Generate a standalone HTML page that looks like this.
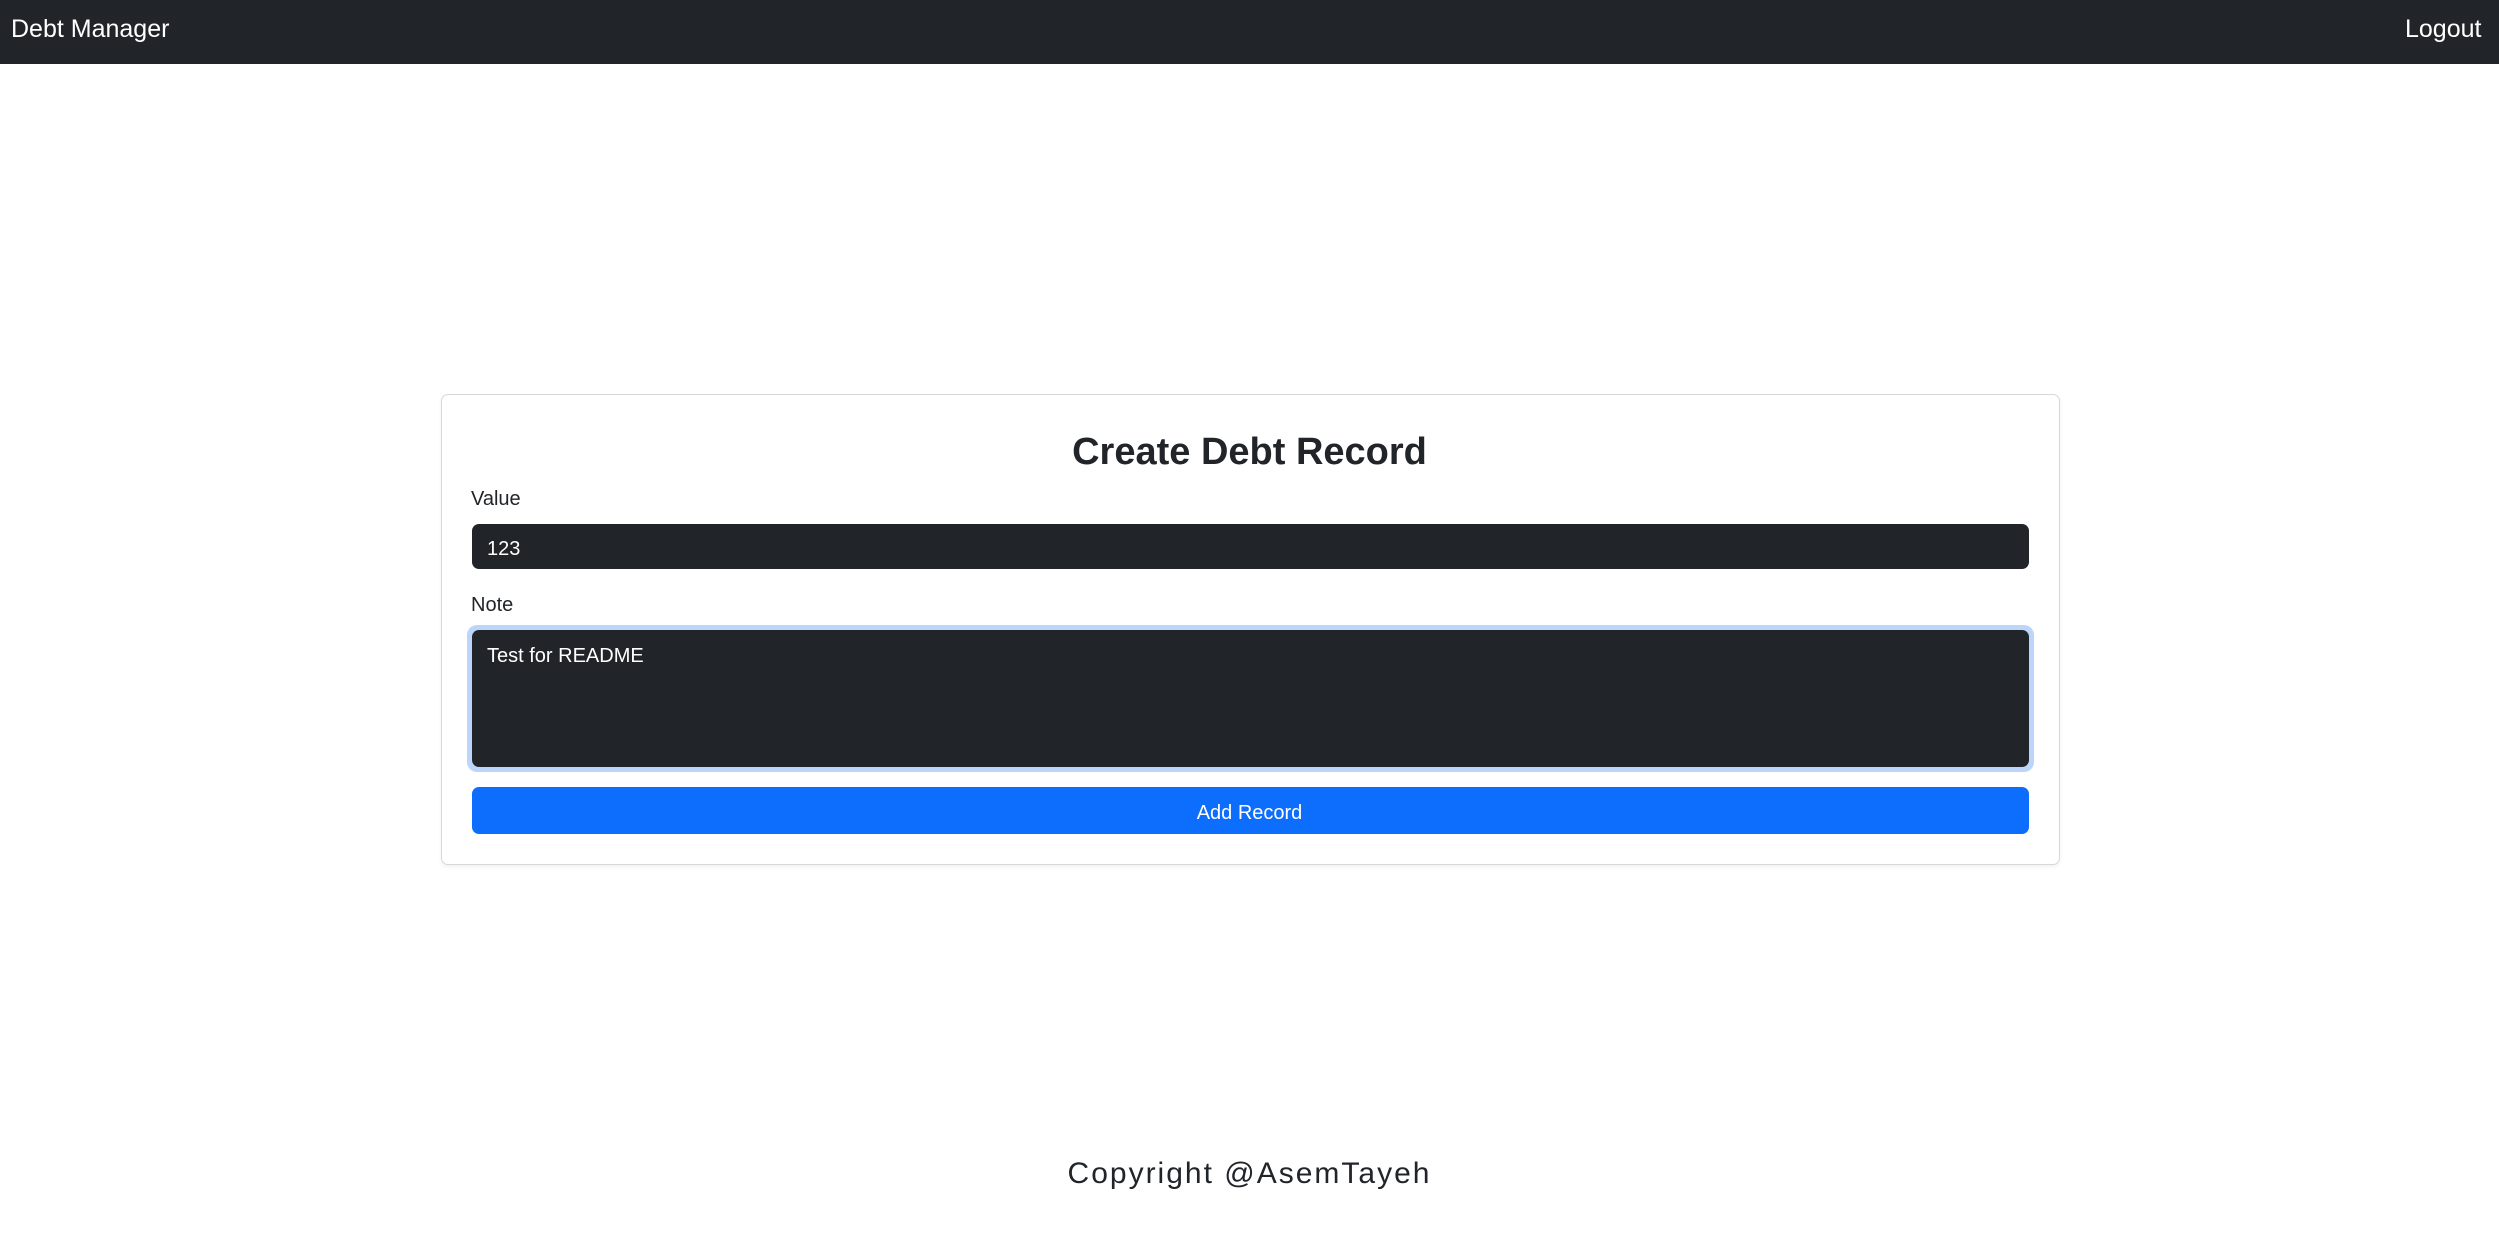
<!DOCTYPE html>
<html><head><meta charset="utf-8"><style>
*{box-sizing:border-box;margin:0;padding:0}
body{width:2499px;height:1242px;background:#fff;font-family:"Liberation Sans",sans-serif;position:relative;overflow:hidden;color:#212529}
.nav{position:absolute;left:0;top:0;width:2499px;height:64px;background:#212529}
.t{position:absolute;white-space:nowrap;line-height:1}
.card{position:absolute;left:441px;top:394px;width:1619px;height:471px;border:1.5px solid #d6d8db;border-radius:7px;box-shadow:0 2px 4px rgba(0,0,0,.06)}
.inp{position:absolute;left:472px;width:1557px;background:#212529;border-radius:7px}
</style></head><body>
<div class="nav"></div>
<div class="t" style="left:11px;top:17px;font-size:25px;color:#fff">Debt Manager</div>
<div class="t" style="left:2405px;top:17px;font-size:25px;color:#fff">Logout</div>
<div class="card"></div>
<div class="t" style="left:0;width:2499px;text-align:center;top:433px;font-size:38px;font-weight:bold">Create Debt Record</div>
<div class="t" style="left:471px;top:489px;font-size:20px">Value</div>
<div class="inp" style="top:524px;height:45px"></div>
<div class="t" style="left:487px;top:539px;font-size:20px;color:#fff">123</div>
<div class="t" style="left:471px;top:595px;font-size:20px">Note</div>
<div class="inp" style="left:467px;top:625px;width:1567px;height:147px;background:#bcd6fb;border-radius:10px"></div>
<div class="inp" style="top:630px;height:137px"></div>
<div class="t" style="left:487px;top:646px;font-size:20px;color:#fff">Test for README</div>
<div class="inp" style="top:787px;height:47px;background:#0d6efd"></div>
<div class="t" style="left:0;width:2499px;text-align:center;top:803px;font-size:20px;color:#fff">Add Record</div>
<div class="t" style="left:0;width:2499px;text-align:center;top:1159px;font-size:30px;letter-spacing:2px;color:#212529">Copyright @AsemTayeh</div>
</body></html>
